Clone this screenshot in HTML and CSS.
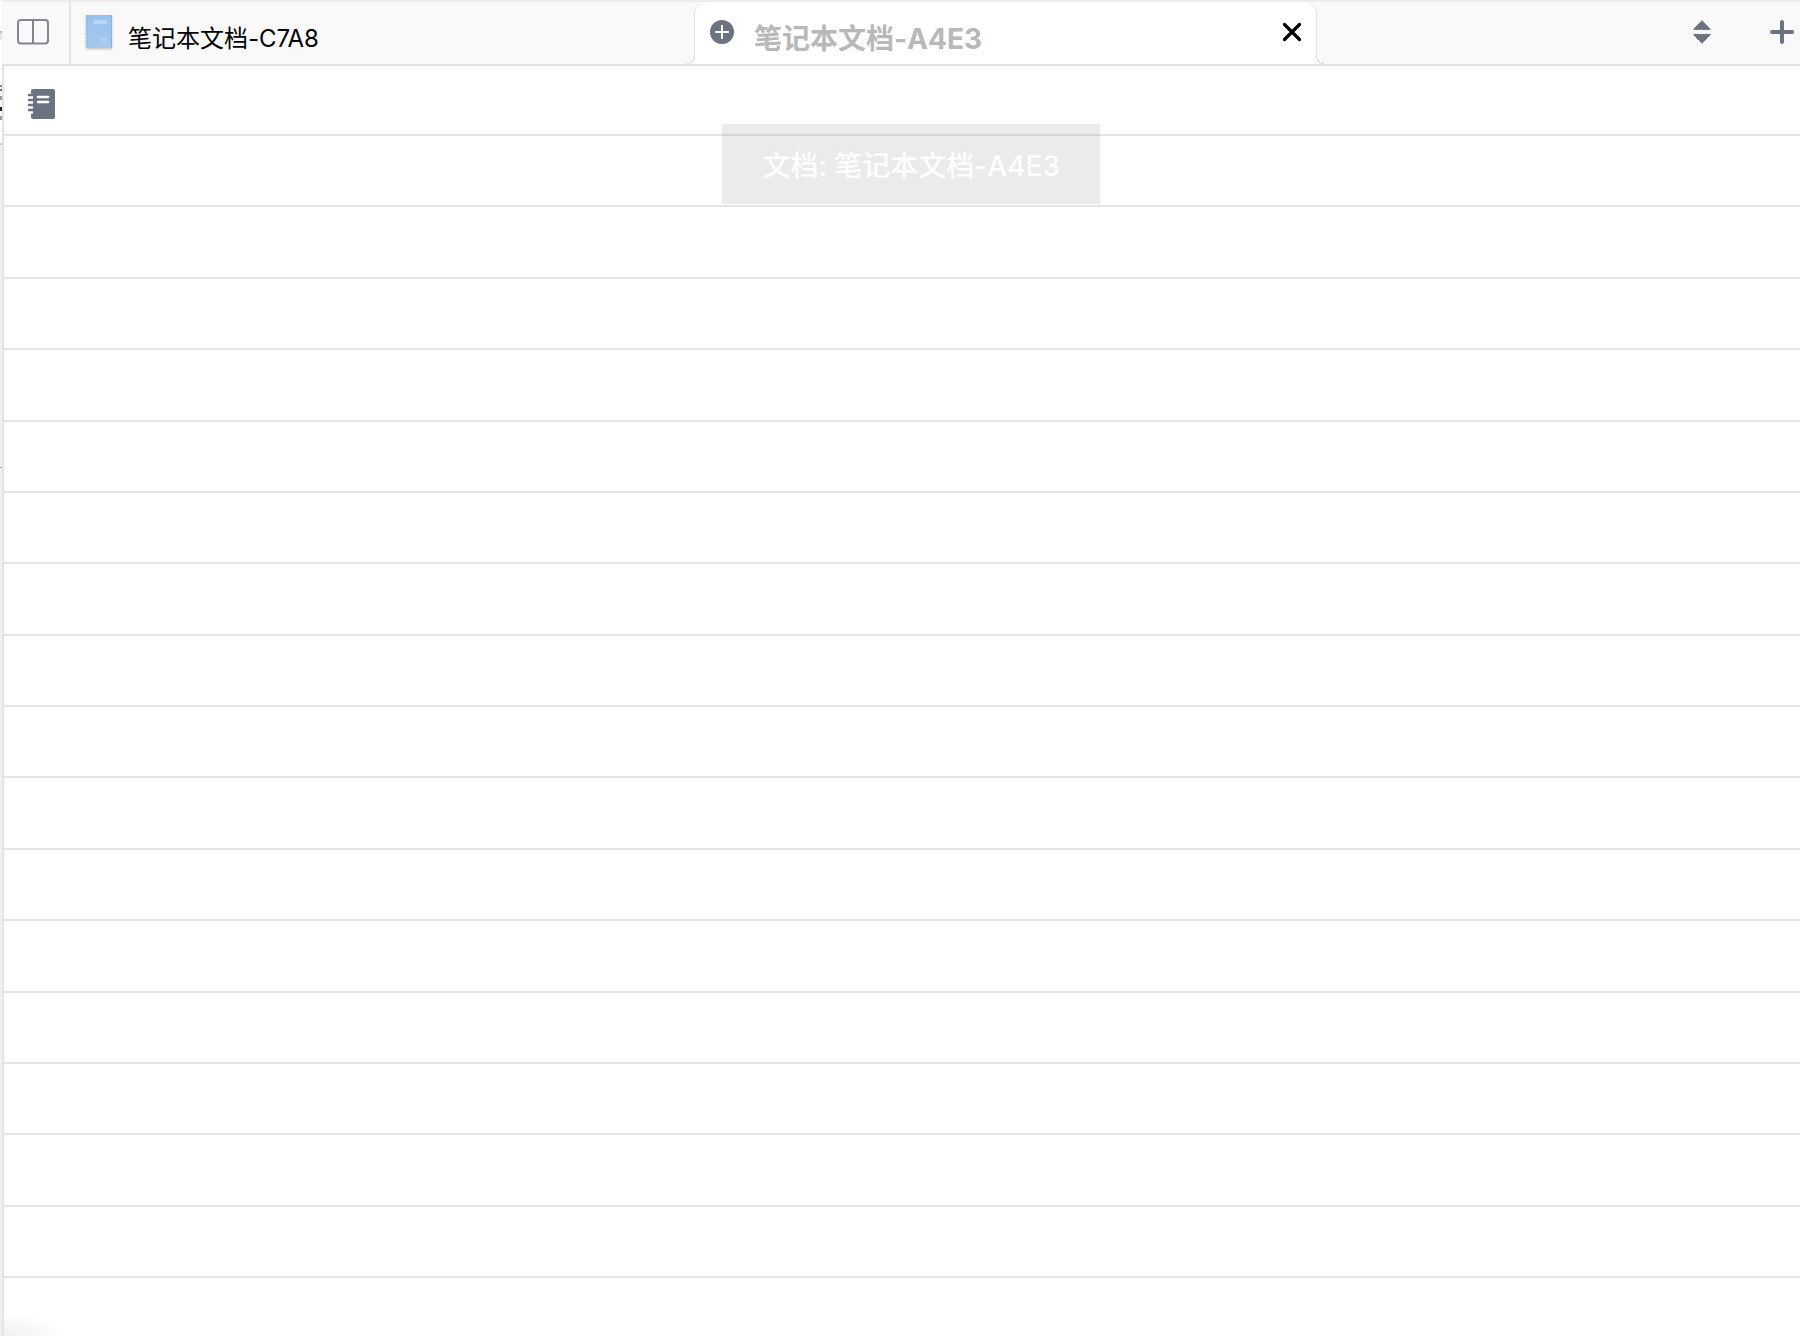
FILE: index.html
```html
<!DOCTYPE html>
<html lang="zh-CN">
<head>
<meta charset="utf-8">
<title>笔记本文档-A4E3</title>
<link rel="stylesheet" href="styles.css">
</head>
<body>
<div class="app">
  <aside class="behind" aria-hidden="true">
    <i class="behind-top"></i>
    <i class="behind-gap"></i>
    <i class="behind-page"></i>
    <i class="behind-rest"></i>
    <i class="behind-base"></i>
  </aside>
  <main class="window">
    <header class="tabbar">
      <button class="split" aria-label="分屏">
        <svg width="32" height="26" viewBox="0 0 32 26" fill="none" stroke="#808694" stroke-width="2"><rect x="1" y="1" width="30" height="23.500" rx="3"/><path d="M16 1v23.500"/></svg>
      </button>
      <nav class="tabs">
        <a class="tab" href="#c7a8">
          <svg class="book" width="26" height="34" viewBox="0 0 26 34"><defs><linearGradient id="cover" x2="0" y2="1"><stop stop-color="#98c1ef"/><stop offset="1" stop-color="#a6c9e9"/></linearGradient></defs><rect width="26" height="33" fill="url(#cover)"/><path d="M25.500 0v33" stroke="#82b3e8"/><path d="M1 1v31" stroke="#8aa9c8" stroke-dasharray="1 2"/><path d="M7 5h14v4H7z" fill="#b9d5f4"/><path d="M15 24h6M15 27h6" stroke="#bcd7f0" stroke-width="1.500"/></svg>
          <span class="tab-title">笔记本文档-C7A8</span>
        </a>
        <div class="tab active">
          <button class="add" aria-label="添加">
            <svg width="24" height="24" viewBox="0 0 24 24"><circle cx="12" cy="12" r="12" fill="#6b7280"/><path d="M12 5v14M5 12h14" stroke="#fff" stroke-width="2"/></svg>
          </button>
          <a class="tab-title" href="#a4e3">笔记本文档-A4E3</a>
          <button class="close" aria-label="关闭">
            <svg width="20" height="20" viewBox="0 0 20 20"><path d="M2.500 2.500l15 15M17.500 2.500l-15 15" stroke="#000" stroke-width="3.200" stroke-linecap="round"/></svg>
          </button>
        </div>
      </nav>
      <div class="actions">
        <button aria-label="切换">
          <svg width="18" height="24" viewBox="0 0 18 24" fill="#6b7280" stroke="#6b7280" stroke-linejoin="round"><path d="M9 .7L17.300 9.300H.7zM.7 14.400h16.600L9 23.300z"/></svg>
        </button>
        <button aria-label="新建">
          <svg width="24" height="24" viewBox="0 0 24 24"><path d="M12 2v20M2 12h20" stroke="#6b7280" stroke-width="4" stroke-linecap="round"/></svg>
        </button>
      </div>
    </header>
    <section class="paper">
      <div class="paper-head">
        <button aria-label="笔记本">
          <svg width="27" height="30" viewBox="0 0 27 30"><path d="M5 0h20q2 0 2 2v26q0 2-2 2H5q-2 0-2-2V2q0-2 2-2z" fill="#6b7280"/><path d="M0 7.300h5M0 12.300h5M0 17.300h5M0 22.300h5" stroke="#fff" stroke-width="5"/><path d="M1 6h5M1 11h5M1 16h5M1 21h5" stroke="#6b7280" stroke-width="2.600" stroke-linecap="round"/><path d="M10 8h10M10 13h10" stroke="#fff" stroke-width="2.600" stroke-linecap="round"/></svg>
        </button>
      </div>
      <div class="lines">
        <div></div><div></div><div></div><div></div><div></div><div></div><div></div><div></div>
        <div></div><div></div><div></div><div></div><div></div><div></div><div></div><div></div>
      </div>
      <div class="paper-foot"></div>
      <div class="toast" role="status">文档: 笔记本文档-A4E3</div>
      <div class="glow"></div>
    </section>
  </main>
</div>
</body>
</html>
```
FILE: styles.css
```css
* {
  box-sizing: border-box;
}

body {
  margin: 0;
  background: #fff;
  font-family: Inter, "Noto Sans CJK SC", sans-serif;
}

button {
  display: flex;
  align-items: center;
  justify-content: center;
  margin: 0;
  padding: 0;
  border: 0;
  background: none;
}

svg {
  display: block;
}

a {
  color: inherit;
  text-decoration: none;
}

.app {
  display: flex;
  min-height: 100vh;
  overflow: hidden;
}

.behind {
  display: flex;
  flex-direction: column;
  width: 2px;
  background: #f0f0f0;
}

.behind-top {
  height: 31px;
  background: #fff;
}

.behind-gap {
  height: 9px;
  background: linear-gradient(#bbb 2px, #e6e6e6 2px);
}

/* Slivers of the page underneath that show past the window's edge */
.behind-page {
  height: 103px;
  background: linear-gradient(
    #fff 45px, #888 45px, #888 47px,
    #fff 47px, #fff 49px, #777 49px, #777 51px,
    #fff 51px, #fff 56px, #999 56px, #999 60px,
    #fff 60px, #fff 67px, #222 67px, #222 71px,
    #fff 71px, #fff 76px, #999 76px, #999 80px,
    #fff 80px
  );
}

.behind-rest {
  height: 325px;
  border-top: 2px solid #ccc;
  border-bottom: 1px solid #aaa;
}

.window {
  flex: 1;
  display: flex;
  flex-direction: column;
  min-width: 0;
}

.tabbar {
  display: flex;
  height: 66px;
  border-top: 2px solid #ededed;
  border-bottom: 2px solid #e2e2e2;
  background: #f9f9f9;
}

.split {
  width: 69px;
  padding: 0 5px 2px 0;
  border-right: 2px solid #e6e6e6;
}

.tabs {
  display: grid;
  grid-template-columns: 1fr 1fr;
  flex: 1;
}

.tab {
  display: flex;
  align-items: center;
  gap: 16px;
  padding: 0 14px 2px 15px;
  font-size: 24px;
  line-height: 32px;
  color: #000;
}

.book {
  filter: drop-shadow(0 1px 1px #bbb);
}

.tab-title {
  flex: 1;
  padding-top: 14px;
}

.active {
  position: relative;
  gap: 20px;
  border: 1px solid #e2e2e2;
  border-width: 0 1px;
  border-radius: 12px 12px 0 0;
  background: #fff;
  font-size: 28px;
  font-weight: 700;
  color: #b8b8b8;
}

.active::before,
.active::after {
  content: "";
  position: absolute;
  bottom: 0;
  width: 8px;
  height: 8px;
}

.active::before {
  right: 100%;
  background: radial-gradient(circle at 0 0, #f9f9f9 7px, #e2e2e2 7px, #e2e2e2 8px, #fff 8px);
}

.active::after {
  left: 100%;
  background: radial-gradient(circle at 100% 0, #f9f9f9 7px, #e2e2e2 7px, #e2e2e2 8px, #fff 8px);
}

.actions {
  display: flex;
  align-items: center;
  justify-content: flex-end;
  gap: 59px;
  width: 483px;
  padding: 0 6px 2px 0;
}

.paper {
  position: relative;
  flex: 1;
  display: flex;
  flex-direction: column;
  border-left: 2px solid #e4e4e4;
}

.paper-head {
  display: flex;
  align-items: center;
  height: 70px;
  padding: 7px 24px 0;
  border-bottom: 2px solid #e5e5e5;
}

.lines {
  flex: 1;
  display: flex;
  flex-direction: column;
}

.lines div {
  flex: 1;
  border-bottom: 2px solid #e5e5e5;
}

.paper-foot {
  height: 58px;
}

.toast {
  position: absolute;
  top: 58px;
  left: 40%;
  padding: 26px 40px 22px;
  background: rgba(0, 0, 0, 0.08);
  color: #fff;
  font-size: 28px;
  font-weight: 500;
  line-height: 32px;
  white-space: nowrap;
}

.glow {
  position: absolute;
  left: 0;
  bottom: 0;
  width: 64px;
  height: 24px;
  background: radial-gradient(ellipse at bottom left, rgba(0, 0, 0, 0.06), rgba(0, 0, 0, 0) 70%);
}
```
